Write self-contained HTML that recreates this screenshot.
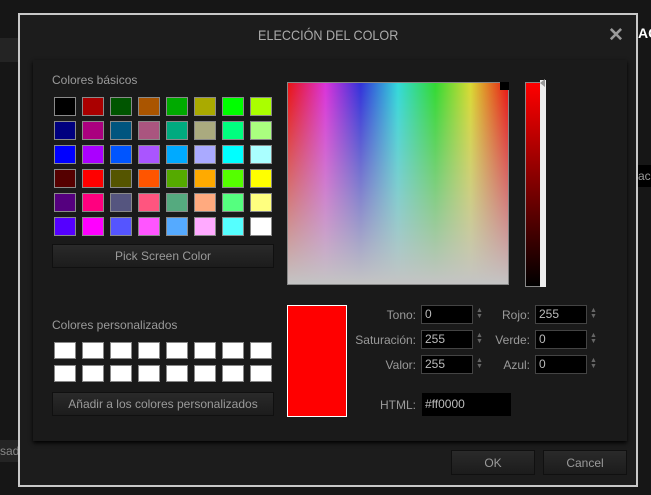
<!DOCTYPE html>
<html><head><meta charset="utf-8"><style>
*{margin:0;padding:0;box-sizing:border-box}
body{width:651px;height:495px;background:#161616;position:relative;overflow:hidden;font-family:"Liberation Sans",sans-serif;}
.a{position:absolute}
.lbl{color:#9a9a9a;font-size:12px}
.sw{position:absolute;width:22px;height:19px;border:1px solid #8a8a8a}
.cw{position:absolute;width:22px;height:17px;background:#fff;border:1px solid #888}
.btn{position:absolute;background:linear-gradient(#2a2a2a,#1c1c1c);border:1px solid #101010;color:#9a9a9a;font-size:12px;text-align:center}
.inp{position:absolute;background:#000;border:1px solid #444;color:#bbb;font-size:12px;padding-left:3px;line-height:17px;width:52px;height:19px}
.r{position:absolute;text-align:right;width:80px;color:#9a9a9a;font-size:12px}
.sp{position:absolute;color:#666;font-size:7px;line-height:6px}
</style></head><body>
<div class="a" style="left:0;top:38px;width:20px;height:24px;background:#242424"></div>
<div class="a" style="left:0;top:440px;width:20px;height:22px;background:#242424;color:#888;font-size:12px;line-height:22px">sad</div>
<div class="a" style="left:638px;top:25px;color:#fff;font-weight:bold;font-size:14px">AC</div>
<div class="a" style="left:638px;top:165px;width:13px;height:22px;background:#000;color:#999;font-size:12px;line-height:22px">aci</div>
<div class="a" style="left:18px;top:13px;width:620px;height:474px;border:2px solid #c8c8c8;background:#1c1c1c"></div>
<div class="a" style="left:0;top:27px;width:651px;text-align:center;color:#aaa;font-size:14px;padding-left:6px;transform:scaleX(0.9)">ELECCIÓN DEL COLOR</div>
<div class="a" style="left:608px;top:24px;color:#999;font-size:19px;font-weight:bold">✕</div>
<div class="a" style="left:33px;top:60px;width:594px;height:381px;background:#1a1a1a;box-shadow:0 2px 4px #000"></div>
<div class="a lbl" style="left:52px;top:73px">Colores básicos</div>
<div id="g"></div>
<div class="btn" style="left:52px;top:244px;width:222px;height:24px;line-height:22px">Pick Screen Color</div>
<div class="a" style="left:287px;top:82px;width:222px;height:203px;border:1px solid #888;background:linear-gradient(to bottom,rgba(192,192,192,0.1),#c4c4c4),linear-gradient(to right,#e00,#d2d 17%,#22d 33%,#2dd 50%,#2d2 67%,#dd2 83%,#e00)"></div>
<div class="a" style="left:500px;top:82px;width:9px;height:8px;background:#000"></div>
<div class="a" style="left:525px;top:82px;width:16px;height:205px;border:1px solid #888;background:linear-gradient(#f00,#000)"></div>
<div class="a" style="left:540px;top:80px;width:6px;height:207px;background:#eee"></div>
<div class="a" style="left:540px;top:79px;width:0;height:0;border-top:4px solid transparent;border-bottom:4px solid transparent;border-right:5px solid #999"></div>
<div class="a lbl" style="left:52px;top:318px">Colores personalizados</div>
<div id="c"></div>
<div class="btn" style="left:52px;top:392px;width:222px;height:24px;line-height:22px">Añadir a los colores personalizados</div>
<div class="a" style="left:287px;top:305px;width:60px;height:112px;background:#f00;border:1px solid #fff"></div>
<div class="r" style="left:336px;top:308px">Tono:</div><div class="inp" style="left:421px;top:305px">0</div>
<div class="r" style="left:336px;top:333px">Saturación:</div><div class="inp" style="left:421px;top:330px">255</div>
<div class="r" style="left:336px;top:358px">Valor:</div><div class="inp" style="left:421px;top:355px">255</div>
<div class="r" style="left:450px;top:308px">Rojo:</div><div class="inp" style="left:535px;top:305px">255</div>
<div class="r" style="left:450px;top:333px">Verde:</div><div class="inp" style="left:535px;top:330px">0</div>
<div class="r" style="left:450px;top:358px">Azul:</div><div class="inp" style="left:535px;top:355px">0</div>
<div class="sp" style="left:476px;top:308px">▲<br>▼</div><div class="sp" style="left:476px;top:333px">▲<br>▼</div><div class="sp" style="left:476px;top:358px">▲<br>▼</div>
<div class="sp" style="left:590px;top:308px">▲<br>▼</div><div class="sp" style="left:590px;top:333px">▲<br>▼</div><div class="sp" style="left:590px;top:358px">▲<br>▼</div>
<div class="r" style="left:336px;top:398px">HTML:</div>
<div class="inp" style="left:422px;top:393px;width:89px;height:23px;line-height:22px;border:none">#ff0000</div>
<div class="btn" style="left:451px;top:450px;width:84px;height:25px;line-height:25px">OK</div>
<div class="btn" style="left:543px;top:450px;width:84px;height:25px;line-height:25px">Cancel</div>
<script>
var cols=["#000000","#aa0000","#005500","#aa5500","#00aa00","#aaaa00","#00ff00","#aaff00","#00007f","#aa007f","#00557f","#aa557f","#00aa7f","#aaaa7f","#00ff7f","#aaff7f","#0000ff","#aa00ff","#0055ff","#aa55ff","#00aaff","#aaaaff","#00ffff","#aaffff","#550000","#ff0000","#555500","#ff5500","#55aa00","#ffaa00","#55ff00","#ffff00","#55007f","#ff007f","#55557f","#ff557f","#55aa7f","#ffaa7f","#55ff7f","#ffff7f","#5500ff","#ff00ff","#5555ff","#ff55ff","#55aaff","#ffaaff","#55ffff","#ffffff"];
var h="";for(var i=0;i<48;i++){h+='<div class="sw" style="left:'+(54+(i%8)*28)+'px;top:'+(97+Math.floor(i/8)*24)+'px;background:'+cols[i]+'"></div>';}
document.getElementById("g").innerHTML=h;
h="";for(var i=0;i<16;i++){h+='<div class="cw" style="left:'+(54+(i%8)*28)+'px;top:'+(342+Math.floor(i/8)*23)+'px"></div>';}
document.getElementById("c").innerHTML=h;
</script>
</body></html>
